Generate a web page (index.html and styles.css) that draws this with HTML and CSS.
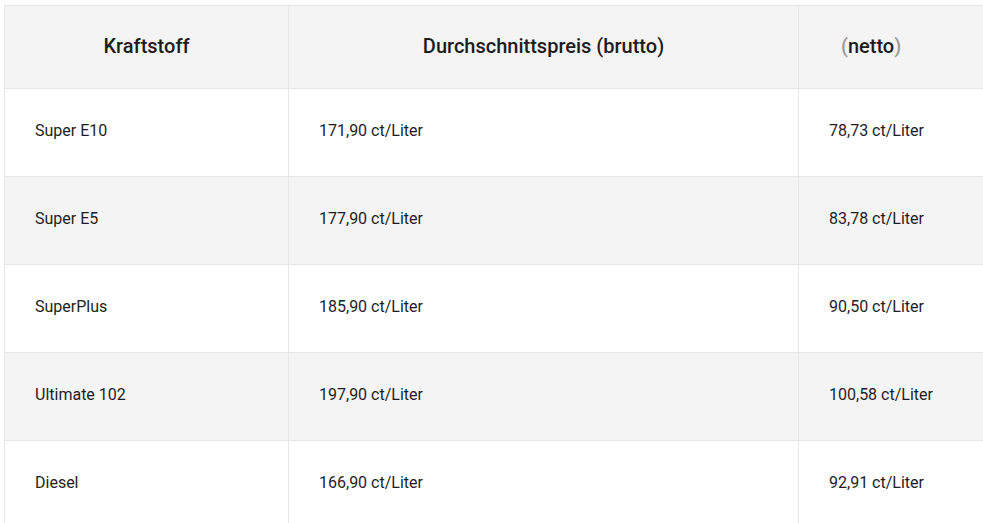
FILE: index.html
```html
<!DOCTYPE html>
<html lang="de">
<head>
<meta charset="utf-8">
<title>Kraftstoffpreise</title>
<link rel="stylesheet" href="styles.css">
</head>
<body>
<div class="wrap">
<table class="prices">
  <colgroup>
    <col class="c1">
    <col class="c2">
    <col class="c3">
  </colgroup>
  <thead>
    <tr>
      <th class="h-center">Kraftstoff</th>
      <th class="h-center">Durchschnittspreis (brutto)</th>
      <th class="h-netto"><span class="paren">(</span>netto<span class="paren">)</span></th>
    </tr>
  </thead>
  <tbody>
    <tr><td>Super E10</td><td>171,90 ct/Liter</td><td>78,73 ct/Liter</td></tr>
    <tr class="alt"><td>Super E5</td><td>177,90 ct/Liter</td><td>83,78 ct/Liter</td></tr>
    <tr><td>SuperPlus</td><td>185,90 ct/Liter</td><td>90,50 ct/Liter</td></tr>
    <tr class="alt"><td>Ultimate 102</td><td>197,90 ct/Liter</td><td>100,58 ct/Liter</td></tr>
    <tr><td>Diesel</td><td>166,90 ct/Liter</td><td>92,91 ct/Liter</td></tr>
  </tbody>
</table>
</div>
</body>
</html>
```
FILE: styles.css
```css
html, body {
  margin: 0;
  padding: 0;
  background: #ffffff;
}
.wrap {
  padding: 5px 0 0 4px;
  width: 100%;
  height: 523px;
  box-sizing: border-box;
  overflow: hidden;
}
.prices {
  border-collapse: collapse;
  table-layout: fixed;
  width: 1100px;
  font-family: Roboto, "Liberation Sans", Arial, sans-serif;
  color: #1e1e1e;
}
.c1 { width: 284px; }
.c2 { width: 510px; }
.c3 { width: 306px; }
.prices th,
.prices td {
  border: 1px solid #e6e6e6;
}
.prices th {
  background: #f4f4f4;
  height: 80px;
  padding: 0 0 2px 0;
  font-size: 20px;
  font-weight: 500;
  color: #1c1c1c;
  vertical-align: middle;
}
.h-center { text-align: center; }
.h-netto {
  text-align: left;
  padding-left: 42px !important;
}
.paren { color: #9a9a9a; }
.prices td {
  height: 88px;
  padding: 0 0 4px 30px;
  font-size: 16px;
  vertical-align: middle;
  box-sizing: border-box;
}
.prices tr.alt td { background: #f4f4f4; }
```
